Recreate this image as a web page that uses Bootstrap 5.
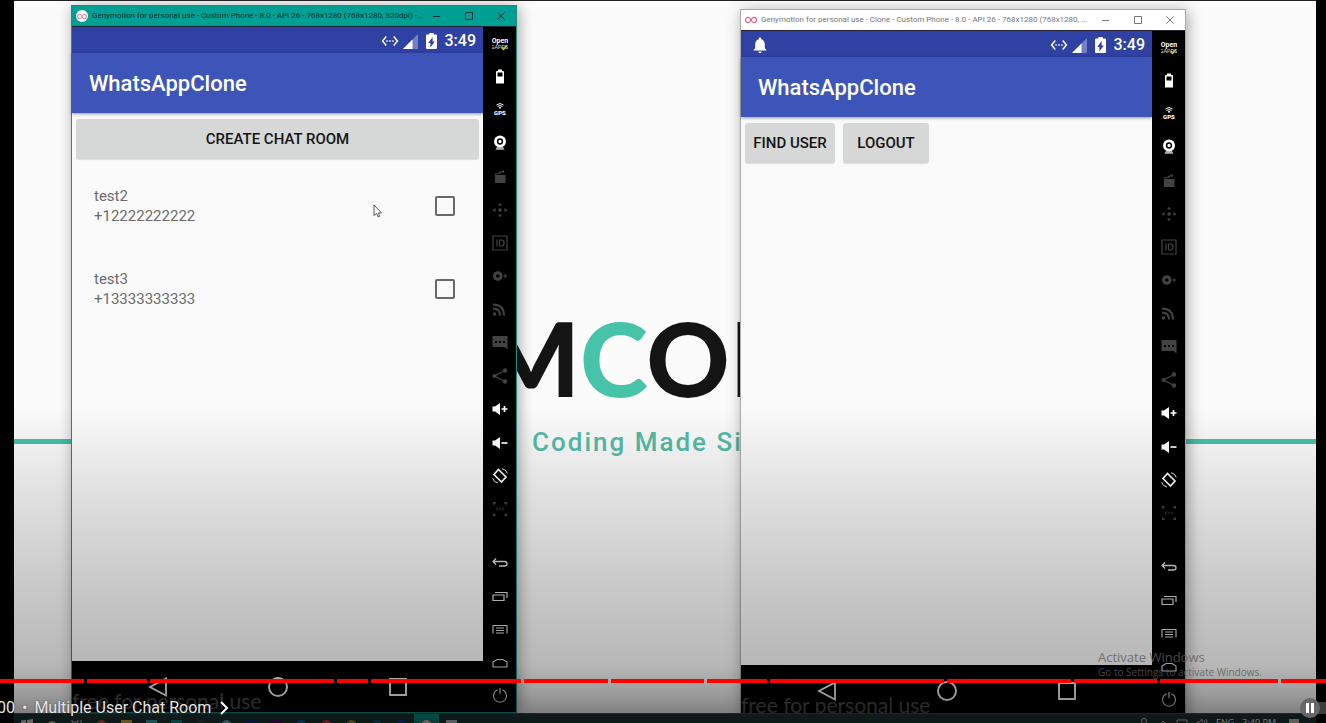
<!DOCTYPE html>
<html lang="en">
<head>
<meta charset="utf-8">
<meta name="viewport" content="width=device-width, initial-scale=1">
<title>Multiple User Chat Room</title>
<link href="https://cdn.jsdelivr.net/npm/bootstrap@5.3.0/dist/css/bootstrap.min.css" rel="stylesheet">
<style>
  body { background: #000; font-family: Roboto, sans-serif; }
  button { border: 0; background: none; color: inherit; padding: 0; }
  svg { display: block; }
  .player { height: 100vh; padding: 0 10px 0 14px; }
  .desk { background: #fbfbfb; border-top: 1px solid #222; }

  /* wallpaper */
  .logo-row { top: 296px; left: 468px; font: 900 103px/120px Lato, sans-serif; color: #141414; }
  .logo-row .c { color: #46c3a8; }
  .tagline { top: 421px; left: 518px; font-size: 26px; line-height: 40px; font-weight: 500; letter-spacing: 2px; color: #55bca5; }
  .rule { top: 438px; height: 5px; }
  .rule span { width: 300px; background: #46c3a8; }

  /* emulator windows */
  .emu { width: 446px; border: 1px solid #aaa; box-shadow: 2px 2px 14px rgba(0,0,0,.35); background: #000; }
  .emu-a { left: 57px; top: 4px; bottom: 10px; border-color: #1f8c82; }
  .emu-b { left: 726px; top: 8px; bottom: 6px; }
  .titlebar { height: 21px; font: 8px/20px Roboto, sans-serif; background: #fff; color: #777; border-bottom: 1px solid #223; }
  .emu-a .titlebar { background: #009f93; color: #0c2f2e; }
  .logo-dot { width: 12px; height: 12px; border-radius: 6px; background: #fff; }
  .win-btns { width: 84px; padding-right: 10px; }
  .screen { background: #fafafa; }
  .status { height: 26px; background: #2f42a3; font-size: 16px; font-weight: 500; line-height: 26px; padding: 2px 7px 0 12px; color: #fff; }
  .appbar { height: 60px; background: #3d55b9; color: #fff; font-size: 22px; font-weight: 500; padding: 2px 0 0 17px; box-shadow: 0 1px 3px rgba(0,0,0,.4); }
  .actions { padding: 6px 4px 0; }
  .droid-btn { height: 40px; border-radius: 3px; background: #d6d7d7; color: #151515; font-size: 15px; font-weight: 500; box-shadow: 0 1px 1px rgba(0,0,0,.12); }
  .w-find { width: 90px; }
  .w-logout { width: 86px; }
  .contact { height: 83px; padding: 10px 28px 0 22px; font-size: 15px; line-height: 20px; color: #6c6c6c; }
  .contact input { appearance: none; width: 20px; height: 20px; margin: 0; border: 2px solid #686868; border-radius: 2px; }
  .navkeys { height: 51px; color: #fff; gap: 100px; }
  .watermark { left: 0; bottom: -1px; font: 21px/24px Lato, sans-serif; color: #4c4c4c; }
  .tools { width: 33px; color: #fff; }
  .tools .grp-top { flex: 15 1 0; }
  .tools .grp-low { flex: 5 1 0; margin-top: 20px; color: #dcdcdc; }
  .tools button { flex: 1 1 0; display: flex; align-items: center; justify-content: center; }
  .tools .off { color: #424242; }
  .pointer { left: 359px; top: 203px; }

  /* taskbar runs past the lower edge */
  .taskbar { bottom: -16px; height: 26px; background: #1d3634; border-top: 1px solid #2b5551; font: 9px/18px "Open Sans", sans-serif; color: #fff; }
  .tb-item { width: 25px; height: 25px; display: flex; align-items: center; justify-content: center; }
  .tb-item.active { background: #0d9187; }
  .chip { width: 11px; height: 13px; }
  .round { border-radius: 50%; }
  .activate { left: 1084px; top: 647px; font: 13px/18px "Open Sans", sans-serif; color: rgba(125,125,125,.8); }
  .activate small { font-size: 10px; line-height: 13px; }

  /* playback overlay */
  .scrim { inset: 0; background: linear-gradient(to bottom, rgba(0,0,0,0) 56%, rgba(0,0,0,.1) 68%, rgba(0,0,0,.2) 81%, rgba(0,0,0,.27) 92%, rgba(0,0,0,.38) 96%, rgba(0,0,0,.55) 100%); }
  .seek { bottom: 40px; height: 4px; gap: 3px; }
  .seek span { background: #f00; }
  .chapter { left: -3px; bottom: 4px; font-size: 16px; line-height: 22px; color: #e6e6e6; text-shadow: 0 0 2px rgba(0,0,0,.6); }
  .dot { padding: 0 7px 0 7px; }
  .autoplay { right: 0; bottom: 5px; width: 26px; height: 20px; }
  .autoplay::before { content: ""; position: absolute; right: 0; top: 4px; width: 16px; height: 12px; background: #3d3d3d; }
  .autoplay span { position: relative; width: 20px; height: 20px; background: #686868; color: #fff; }
</style>
</head>
<body>
<svg width="0" height="0" class="position-absolute" aria-hidden="true">
  <defs>
    <symbol id="loop" viewBox="0 0 16 10"><path d="M8 5C6.500 2 5.500 1.500 4.200 1.500a3.500 3.500 0 0 0 0 7C5.500 8.500 6.500 8 8 5s2.500-3.500 3.800-3.500a3.500 3.500 0 0 1 0 7C10.500 8.500 9.500 8 8 5z" fill="none" stroke="#e8527d" stroke-width="1.400"/></symbol>
    <symbol id="min" viewBox="0 0 10 10"><path d="M1 5.500h7" stroke="currentColor"/></symbol>
    <symbol id="max" viewBox="0 0 10 10"><path d="M1.500 1.500h7v7h-7z" fill="none" stroke="currentColor"/></symbol>
    <symbol id="close" viewBox="0 0 10 10"><path d="M1.500 1.500l7 7m0-7l-7 7" stroke="currentColor"/></symbol>
    <symbol id="ether" viewBox="0 0 24 24"><path fill="currentColor" d="M7.770 6.760L6.230 5.480.820 12l5.410 6.520 1.540-1.280L3.420 12l4.350-5.240zM7 13h2v-2H7v2zm10-2h-2v2h2v-2zm-6 2h2v-2h-2v2zm6.770-7.520l-1.540 1.280L20.580 12l-4.350 5.240 1.540 1.280L23.180 12l-5.410-6.520z"/></symbol>
    <symbol id="signal" viewBox="0 0 15 15"><path d="M0 15L15 0v15z" fill="#7381c4"/><path d="M0 15L9.500 5.500V15z" fill="#fff"/></symbol>
    <symbol id="batt" viewBox="7 2 10 20" preserveAspectRatio="none"><path fill="currentColor" d="M15.670 4H14V2h-4v2H8.330C7.600 4 7 4.600 7 5.330v15.330C7 21.400 7.600 22 8.330 22h7.330c.740 0 1.340-.600 1.340-1.330V5.330C17 4.600 16.400 4 15.670 4zM11 20v-5.500H9L13 7v5.500h2L11 20z"/></symbol>
    <symbol id="bell" viewBox="4 2 16 20"><path fill="currentColor" d="M12 22c1.100 0 2-.900 2-2h-4c0 1.100.890 2 2 2zm6-6v-5c0-3.070-1.640-5.640-4.500-6.320V4c0-.830-.670-1.500-1.500-1.500s-1.500.670-1.500 1.500v.680C7.630 5.360 6 7.920 6 11v5l-2 2v1h16v-1l-2-2z"/></symbol>
    <symbol id="t-gapps" viewBox="0 0 16 16"><text x="8" y="7" text-anchor="middle" font-size="7" font-weight="700" fill="currentColor">Open</text><text x="7.500" y="13" text-anchor="middle" font-size="5.500" fill="#ddd">GAPPS</text><path d="M9.500 11.500l2 2 3.500-4" fill="none" stroke="#c5d94a" stroke-width="1.200"/></symbol>
    <symbol id="t-batt" viewBox="0 0 16 16"><path fill="currentColor" fill-rule="evenodd" d="M6 .5h4V2h1q1 0 1 1v11.500H4V3q0-1 1-1h1zM5.500 3.500v4h5v-4z"/></symbol>
    <symbol id="t-gps" viewBox="0 0 16 16"><g fill="none" stroke="currentColor"><path d="M4.500 3q3.500-3 7 0M5.500 4.500q2.500-2 5 0"/></g><circle cx="8" cy="5.700" r="1" fill="currentColor"/><text x="8" y="13" text-anchor="middle" font-size="6" font-weight="900" fill="currentColor">GPS</text></symbol>
    <symbol id="t-cam" viewBox="0 0 16 16"><circle cx="8" cy="6.500" r="6" fill="currentColor"/><circle cx="8" cy="6.500" r="2.400" fill="none" stroke="#000" stroke-width="1.500"/><path d="M5 12h6l1.500 2.500h-9z" fill="currentColor"/><path d="M4 13h8" stroke="#000" stroke-width=".6"/></symbol>
    <symbol id="t-clap" viewBox="0 0 16 16"><path fill="currentColor" d="M3 6h10.500v8H3zM2.500 5L12 1v2.500L3 6z"/><path d="M5 6l1.500-2.500M8.500 5.500L10 2.500" stroke="#000" stroke-width=".8"/></symbol>
    <symbol id="t-move" viewBox="0 0 16 16"><circle cx="8" cy="8" r="1.800" fill="currentColor"/><path fill="currentColor" d="M8 .5L10 3.500H6zM8 15.500L10 12.500H6zM.5 8L3.500 6v4zM15.500 8L12.500 6v4z"/></symbol>
    <symbol id="t-id" viewBox="0 0 16 16"><path d="M1 1h14v14H1zM5 4.500v7M7.500 5v6h2q2.500 0 2.500-3t-2.500-3z" fill="none" stroke="currentColor" stroke-width="1.200"/></symbol>
    <symbol id="t-disc" viewBox="0 0 16 16"><circle cx="5.800" cy="8" r="3.300" fill="none" stroke="currentColor" stroke-width="3"/><path d="M14 5l-3 3.500h2L12 11l3.500-3.500h-2z" fill="currentColor"/></symbol>
    <symbol id="t-rss" viewBox="0 0 16 16"><circle cx="2.500" cy="12" r="1.700" fill="currentColor"/><path d="M1 6.500q7 0 7 7M1 2.500q11 0 11 11" fill="none" stroke="currentColor" stroke-width="2"/></symbol>
    <symbol id="t-chat" viewBox="0 0 16 16"><path d="M.5 1h15v13.500l-3-2.500H.5z" fill="currentColor"/><path d="M3 7h2m2 0h2m2 0h2" stroke="#000" stroke-width="2"/></symbol>
    <symbol id="t-share" viewBox="0 0 16 16"><g fill="currentColor"><circle cx="2.500" cy="8" r="2"/><circle cx="13" cy="2.500" r="2.200"/><circle cx="13" cy="13.500" r="2.200"/></g><path d="M13 2.500L2.500 8 13 13.500" fill="none" stroke="currentColor" stroke-width="1.400"/></symbol>
    <symbol id="t-volup" viewBox="0 0 16 16"><path d="M.5 5.500H3L8 2v12l-5-3.500H.5z" fill="currentColor"/><path d="M9.500 8H15.500M12.500 5v6" stroke="currentColor" stroke-width="1.700"/></symbol>
    <symbol id="t-voldn" viewBox="0 0 16 16"><path d="M.5 5.500H3L8 2v12l-5-3.500H.5z" fill="currentColor"/><path d="M9.500 8H15.500" stroke="currentColor" stroke-width="1.700"/></symbol>
    <symbol id="t-rot" viewBox="0 0 16 16"><g fill="none" stroke="currentColor"><path d="M6.500 1.500L14 9l-4.500 5L2 6.500z" stroke-width="1.700"/><path d="M10 .7q4.500.800 5.300 4.800M6 15q-4.500-.800-5.300-4.800" stroke-width=".9"/></g></symbol>
    <symbol id="t-zoom" viewBox="0 0 16 16"><path fill="currentColor" d="M1 1h3L3 3 1 4zM15 1h-3l1 2 2 1zM1 15h3l-1-2-2-1zM15 15h-3l1-2 2-1z"/><path d="M5 6.500v3M11 6.500v3M8 7v2" stroke="currentColor"/></symbol>
    <symbol id="t-back" viewBox="0 0 16 16"><path d="M4 4.500L1 7.500l3 3M1.500 7.500h11q2.500 0 2.500 2.200t-2.500 2.300H7" fill="none" stroke="currentColor" stroke-width="1.300"/></symbol>
    <symbol id="t-recent" viewBox="0 0 16 16"><path d="M1 7h11v5.500H1zM3 4.500h12V10" fill="none" stroke="currentColor" stroke-width="1.200"/></symbol>
    <symbol id="t-menu" viewBox="0 0 16 16"><path d="M1 12.500v-8h14v8M4 7h8M4 9.500h8M4 12h8" fill="none" stroke="currentColor" stroke-width="1.100"/></symbol>
    <symbol id="t-home" viewBox="0 0 16 16"><path d="M1 13V8l4-2.500h6L15 8v5z" fill="none" stroke="currentColor" stroke-width="1.100"/></symbol>
    <symbol id="t-power" viewBox="0 0 16 16"><path d="M5.500 2.800a6.500 6.500 0 1 0 5 0M8 1v6" fill="none" stroke="currentColor" stroke-width="1.100"/></symbol>
    <symbol id="n-back" viewBox="0 0 20 20"><path d="M18 1.500v17L2 10z" fill="none" stroke="currentColor" stroke-width="1.800"/></symbol>
    <symbol id="n-home" viewBox="0 0 20 20"><circle cx="10" cy="10" r="9" fill="none" stroke="currentColor" stroke-width="1.900"/></symbol>
    <symbol id="n-sq" viewBox="0 0 20 20"><path d="M2 2h16v16H2z" fill="none" stroke="currentColor" stroke-width="1.900"/></symbol>
  </defs>
</svg>

<main class="player position-relative overflow-hidden">
  <div class="desk position-relative overflow-hidden h-100">
    <div class="rule position-absolute w-100 d-flex justify-content-between"><span></span><span></span></div>
    <div class="logo-row position-absolute text-nowrap">M<span class="c">C</span>OD</div>
    <div class="tagline position-absolute text-nowrap">Coding Made Simple</div>

    <section class="emu emu-a position-absolute d-flex flex-column" aria-label="Custom Phone">
      <header class="titlebar d-flex align-items-center flex-shrink-0">
        <span class="logo-dot d-flex align-items-center justify-content-center mx-1"><svg width="10" height="7"><use href="#loop"/></svg></span>
        <span class="flex-fill text-nowrap">Genymotion for personal use - Custom Phone - 8.0 - API 26 - 768x1280 (768x1280, 320dpi) -...</span>
        <span class="win-btns d-flex justify-content-between"><button aria-label="Minimize"><svg width="10" height="10"><use href="#min"/></svg></button><button aria-label="Maximize"><svg width="10" height="10"><use href="#max"/></svg></button><button aria-label="Close"><svg width="10" height="10"><use href="#close"/></svg></button></span>
      </header>
      <div class="d-flex flex-fill">
        <div class="flex-fill d-flex flex-column">
          <div class="screen flex-fill d-flex flex-column">
            <div class="status d-flex align-items-center justify-content-end"><svg width="18" height="18" class="me-1"><use href="#ether"/></svg><svg width="15" height="15" class="me-2"><use href="#signal"/></svg><svg width="11" height="16" class="me-2"><use href="#batt"/></svg><span>3:49</span></div>
            <h1 class="appbar d-flex align-items-center mb-0">WhatsAppClone</h1>
            <div class="actions"><button class="droid-btn w-100 d-block">CREATE CHAT ROOM</button></div>
            <label class="contact d-flex align-items-center justify-content-between"><span>test2<br>+12222222222</span><input type="checkbox"></label>
            <label class="contact d-flex align-items-center justify-content-between"><span>test3<br>+13333333333</span><input type="checkbox"></label>
          </div>
          <div class="navkeys d-flex align-items-center justify-content-center position-relative"><span class="watermark position-absolute">free for personal use</span><button aria-label="Back"><svg width="20" height="20"><use href="#n-back"/></svg></button><button aria-label="Home"><svg width="20" height="20"><use href="#n-home"/></svg></button><button aria-label="Overview"><svg width="20" height="20"><use href="#n-sq"/></svg></button></div>
        </div>
        <div class="tools d-flex flex-column flex-shrink-0" data-tools></div>
      </div>
    </section>

    <section class="emu emu-b position-absolute d-flex flex-column" aria-label="Clone">
      <header class="titlebar d-flex align-items-center flex-shrink-0">
        <span class="d-flex align-items-center mx-1"><svg width="12" height="8"><use href="#loop"/></svg></span>
        <span class="flex-fill text-nowrap">Genymotion for personal use - Clone - Custom Phone - 8.0 - API 26 - 768x1280 (768x1280, ...</span>
        <span class="win-btns d-flex justify-content-between"><button aria-label="Minimize"><svg width="10" height="10"><use href="#min"/></svg></button><button aria-label="Maximize"><svg width="10" height="10"><use href="#max"/></svg></button><button aria-label="Close"><svg width="10" height="10"><use href="#close"/></svg></button></span>
      </header>
      <div class="d-flex flex-fill">
        <div class="flex-fill d-flex flex-column">
          <div class="screen flex-fill d-flex flex-column">
            <div class="status d-flex align-items-center justify-content-end"><svg width="14" height="16" class="me-auto"><use href="#bell"/></svg><svg width="18" height="18" class="me-1"><use href="#ether"/></svg><svg width="15" height="15" class="me-2"><use href="#signal"/></svg><svg width="11" height="16" class="me-2"><use href="#batt"/></svg><span>3:49</span></div>
            <h1 class="appbar d-flex align-items-center mb-0">WhatsAppClone</h1>
            <div class="actions d-flex gap-2"><button class="droid-btn w-find">FIND USER</button><button class="droid-btn w-logout">LOGOUT</button></div>
          </div>
          <div class="navkeys d-flex align-items-center justify-content-center position-relative"><span class="watermark position-absolute">free for personal use</span><button aria-label="Back"><svg width="20" height="20"><use href="#n-back"/></svg></button><button aria-label="Home"><svg width="20" height="20"><use href="#n-home"/></svg></button><button aria-label="Overview"><svg width="20" height="20"><use href="#n-sq"/></svg></button></div>
        </div>
        <div class="tools d-flex flex-column flex-shrink-0" data-tools></div>
      </div>
    </section>

    <svg class="pointer position-absolute" width="10" height="14" viewBox="0 0 10 14"><path d="M1 1v10.500l2.500-2 1.700 3.500 1.500-.700L5.200 9H8.500z" fill="#fff" stroke="#444" stroke-width=".9"/></svg>
    <div class="activate position-absolute text-nowrap">Activate Windows<br><small class="d-block">Go to Settings to activate Windows.</small></div>

    <div class="taskbar position-absolute w-100 d-flex">
      <span class="tb-item"><svg width="12" height="16"><path d="M0 1.500L5 1v6H0zM6 1l6-1v7H6zM0 8h5v6H0zM6 8h6v7H6z" fill="#ddd"/></svg></span>
      <span class="tb-item"><svg width="12" height="14"><circle cx="6" cy="7" r="5" fill="none" stroke="#ddd" stroke-width="1.500"/></svg></span>
      <span class="tb-item"><svg width="12" height="14"><path d="M1 0v2h6V0M1 4h6v7H1zM10 0v12" fill="none" stroke="#ddd"/></svg></span>
      <span class="tb-item"><i class="chip round" style="background:#d9563f"></i></span>
      <span class="tb-item"><i class="chip" style="background:#dfb64e"></i></span>
      <span class="tb-item"><i class="chip" style="background:#37b5b0"></i></span>
      <span class="tb-item"><i class="chip" style="background:#128c84"></i></span>
      <span class="tb-item"><i class="chip round" style="background:#38464a"></i></span>
      <span class="tb-item"><i class="chip round" style="background:#7fb0c8"></i></span>
      <span class="tb-item"><i class="chip" style="background:#0e2f6d"></i></span>
      <span class="tb-item"><i class="chip" style="background:#4a1060"></i></span>
      <span class="tb-item"><i class="chip round" style="background:#1668b0"></i></span>
      <span class="tb-item"><i class="chip round" style="background:#d43a5c"></i></span>
      <span class="tb-item"><i class="chip round" style="background:#8aa83a"></i></span>
      <span class="tb-item"><i class="chip round" style="background:#125d70"></i></span>
      <span class="tb-item"><i class="chip round" style="background:#1d3f9b"></i></span>
      <span class="tb-item active"><i class="chip round" style="background:#f4cdd8"></i></span>
      <span class="tb-item"><i class="chip" style="background:#b9c6cf"></i></span>
      <div class="ms-auto d-flex gap-2 pe-3">
        <svg width="12" height="20"><circle cx="6" cy="7" r="2.500" fill="none" stroke="#ccc"/><path d="M2 14q4-6 8 0" fill="none" stroke="#ccc"/></svg>
        <svg width="10" height="20"><path d="M2 10l3-3 3 3" fill="none" stroke="#ccc"/></svg>
        <svg width="12" height="20"><path d="M1 6h10v7H1z" fill="none" stroke="#ccc"/></svg>
        <svg width="12" height="20"><path d="M1 8h2l3-3v10l-3-3H1zM8 6q2 4 0 8M10 5q3 5 0 10" fill="none" stroke="#ccc"/></svg>
        <span>ENG</span><span>3:49 PM</span>
        <svg width="12" height="20" class="ms-1"><path d="M1 5h10v9H1z" fill="#ccc"/></svg>
      </div>
    </div>
  </div>

  <div class="scrim position-absolute pe-none"></div>
  <div class="seek position-absolute start-0 end-0 d-flex" data-seek></div>
  <div class="chapter position-absolute d-flex align-items-center text-nowrap"><span>00</span><span class="dot">•</span><a href="#" class="text-reset text-decoration-none d-flex align-items-center">Multiple User Chat Room<svg width="10" height="14" class="ms-2" viewBox="0 0 10 14"><path d="M2 1l6 6-6 6" fill="none" stroke="#fff" stroke-width="2"/></svg></a></div>
  <button class="autoplay position-absolute" aria-label="Pause"><span class="rounded-circle d-flex align-items-center justify-content-center"><svg width="8" height="10"><path d="M0 0h3v10H0zM5 0h3v10H5z" fill="#fff"/></svg></span></button>
</main>

<script src="https://cdn.jsdelivr.net/npm/bootstrap@5.3.0/dist/js/bootstrap.bundle.min.js"></script>
<script>
  // emulator side toolbar, shared by both windows
  const top15 = ['gapps','batt','gps','cam','clap','move','id','disc','rss','chat','share','volup','voldn','rot','zoom'];
  const low5 = ['back','recent','menu','home','power'];
  const off = new Set(['clap','move','id','disc','rss','chat','share','zoom']);
  const btn = n => `<button aria-label="${n}" class="${off.has(n) ? 'off' : ''}"><svg width="16" height="16"><use href="#t-${n}"/></svg></button>`;
  document.querySelectorAll('[data-tools]').forEach(el => {
    el.innerHTML = `<div class="grp-top d-flex flex-column">${top15.map(btn).join('')}</div><div class="grp-low d-flex flex-column">${low5.map(btn).join('')}</div>`;
  });
  // chapter lengths along the seek bar
  const chapters = [84, 61, 185, 31, 151, 84, 94, 60, 175, 125, 83, 119, 45];
  document.querySelector('[data-seek]').innerHTML = chapters.map(c => `<span style="flex:${c} 1 0"></span>`).join('');
</script>
</body>
</html>
